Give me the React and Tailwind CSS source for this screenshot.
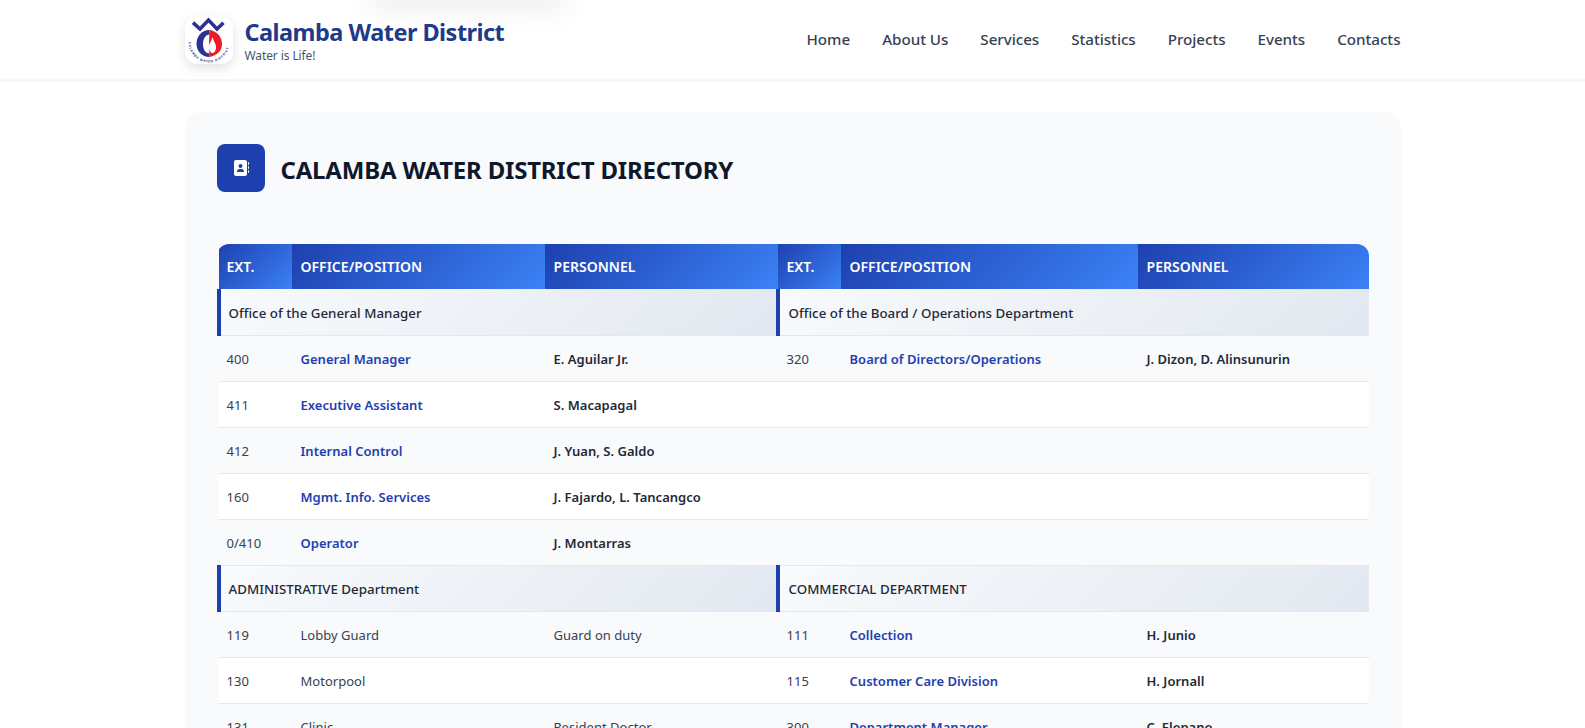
import React from "react";
import { FaAddressBook } from "react-icons/fa6";

const Logo = () => (
  <svg viewBox="0 0 48 48" className="w-12 h-12">
    <path d="M8 6.7 L15 13 L23.5 4 L32 13 L38.5 6.7" fill="none" stroke="#2e3192" strokeWidth="3.6" />
    <path d="M24.5 14 C16 14 11.5 21 11.5 28 C11.5 35 17 41 24.5 41 L24.5 37.5 C20.5 37.5 18 33.5 18 28 C18 23 20.5 18.5 24.5 18.5 Z" fill="#2e3192" />
    <path d="M24.5 14 C32 15 37 21 37 28 C37 35 32 39.5 24.5 41 C24 36 24 20 24.5 14 Z" fill="#ed1c24" />
    <path d="M27.5 21 C28.5 25.5 31 27.5 31 31 C31 34.5 29.5 37 27.5 37 C25.5 37 24 34.5 24 31 C24 27.5 26.5 25.5 27.5 21 Z" fill="#fff" />
    <defs>
      <path id="logo-arc" d="M3.5 26 A20.5 20.5 0 0 0 44.5 26" />
    </defs>
    <text fontSize="3.2" fontWeight="700" fill="#2e3192" fontFamily="'Liberation Sans', sans-serif" textLength="58">
      <textPath href="#logo-arc">CALAMBA WATER DISTRICT</textPath>
    </text>
  </svg>
);

const nav = ["Home", "About Us", "Services", "Statistics", "Projects", "Events", "Contacts"];

const Group = ({ children }) => (
  <td colSpan={3} className="h-[46px] px-2 [&:not(:first-child)]:pl-[9px] pt-1 pb-0 border-b border-b-[#e2e8f0] border-l-4 border-l-[#1e40af] bg-[linear-gradient(135deg,#f8fafc,#e2e8f0)] text-[13.3px] font-medium text-[#1f2937]">
    {children}
  </td>
);

const base = "h-[46px] px-2 [&:not(:first-child)]:pl-[9px] pt-1 pb-0 border-b border-[#e2e8f0]";

const Cells = ({ ext, office, person }) => (
  <>
    <td className={`${base} text-[#374151]`}>{ext}</td>
    <td className={office?.plain !== undefined ? `${base} text-[#374151]` : `${base} text-[#1e40af] font-semibold`}>
      {office?.plain ?? office}
    </td>
    <td className={person?.plain !== undefined ? `${base} text-[#374151]` : `${base} text-[#1f2937] font-semibold`}>
      {person?.plain ?? person}
    </td>
  </>
);

const rows = [
  [["400", "General Manager", "E. Aguilar Jr."], ["320", "Board of Directors/Operations", "J. Dizon, D. Alinsunurin"]],
  [["411", "Executive Assistant", "S. Macapagal"], ["", "", ""]],
  [["412", "Internal Control", "J. Yuan, S. Galdo"], ["", "", ""]],
  [["160", "Mgmt. Info. Services", "J. Fajardo, L. Tancangco"], ["", "", ""]],
  [["0/410", "Operator", "J. Montarras"], ["", "", ""]],
];

const rows2 = [
  [["119", { plain: "Lobby Guard" }, { plain: "Guard on duty" }], ["111", "Collection", "H. Junio"]],
  [["130", { plain: "Motorpool" }, { plain: "" }], ["115", "Customer Care Division", "H. Jornall"]],
  [["131", { plain: "Clinic" }, { plain: "Resident Doctor" }], ["300", "Department Manager", "C. Elepano"]],
];

const Row = ({ r }) => (
  <tr className="even:bg-[#f8fafc] bg-white">
    <Cells ext={r[0][0]} office={r[0][1]} person={r[0][2]} />
    <Cells ext={r[1][0]} office={r[1][1]} person={r[1][2]} />
  </tr>
);

const thCls = "h-[45px] px-2 [&:not(:first-child)]:pl-[9px] py-0 text-left text-[14px] font-semibold uppercase text-white bg-[linear-gradient(135deg,#1e40af,#3b82f6)]";

export default function App() {
  return (
    <div className="min-h-screen bg-white font-['Noto_Sans','Open_Sans',sans-serif] relative">
      <div className="absolute left-[368px] -top-[30px] w-[200px] h-[30px] shadow-[0_10px_30px_rgba(0,0,0,0.07)] rounded-lg" />
      <header className="relative h-[82px] border-b-[3px] border-[#f4f7fe] bg-transparent">
        <div className="mx-auto w-[1216px] h-full flex items-center justify-between">
          <div className="flex items-center gap-3">
            <div className="w-12 h-12 bg-white rounded-xl shadow-[0_4px_12px_rgba(0,0,0,0.12)]">
              <Logo />
            </div>
            <div className="flex flex-col gap-[2px]">
              <div className="text-[23.5px] leading-[30px] font-bold text-[#1e3a8a] tracking-[-0.53px]">Calamba Water District</div>
              <div className="text-[12px] leading-[14px] text-[#4b5563] tracking-[-0.1px]">Water is Life!</div>
            </div>
          </div>
          <nav className="flex items-center gap-8">
            {nav.map((n) => (
              <span key={n} className="text-[15.2px] font-medium text-[#374151] tracking-[-0.04px]">{n}</span>
            ))}
          </nav>
        </div>
      </header>
      <main className="mx-auto w-[1216px] pt-[30px]">
        <section className="rounded-2xl bg-[#f8fafc] p-8">
          <div className="flex items-center gap-4 mb-[52px]">
            <div className="w-12 h-12 rounded-lg bg-[#1e40af] flex items-center justify-center text-white">
              <FaAddressBook className="w-[16px] h-[16px]" />
            </div>
            <h1 className="pt-1 text-[24px] font-bold text-[#0f172a] tracking-[-0.2px]">CALAMBA WATER DISTRICT DIRECTORY</h1>
          </div>
          <div className="rounded-tr-xl rounded-tl-xl overflow-hidden">
            <table className="w-full table-fixed border-collapse text-[13px] tracking-[0.02px]">
              <colgroup>
                <col className="w-[73px]" />
                <col className="w-[253px]" />
                <col className="w-[233px]" />
                <col className="w-[63px]" />
                <col className="w-[297px]" />
                <col />
              </colgroup>
              <thead>
                <tr>
                  {["Ext.", "Office/Position", "Personnel", "Ext.", "Office/Position", "Personnel"].map((h, i) => (
                    <th key={i} className={thCls}>{h}</th>
                  ))}
                </tr>
              </thead>
              <tbody>
                <tr>
                  <Group>Office of the General Manager</Group>
                  <Group>Office of the Board / Operations Department</Group>
                </tr>
                {rows.map((r, i) => <Row key={i} r={r} />)}
                <tr>
                  <Group>ADMINISTRATIVE Department</Group>
                  <Group>COMMERCIAL DEPARTMENT</Group>
                </tr>
                {rows2.map((r, i) => <Row key={i} r={r} />)}
              </tbody>
            </table>
          </div>
        </section>
      </main>
    </div>
  );
}
